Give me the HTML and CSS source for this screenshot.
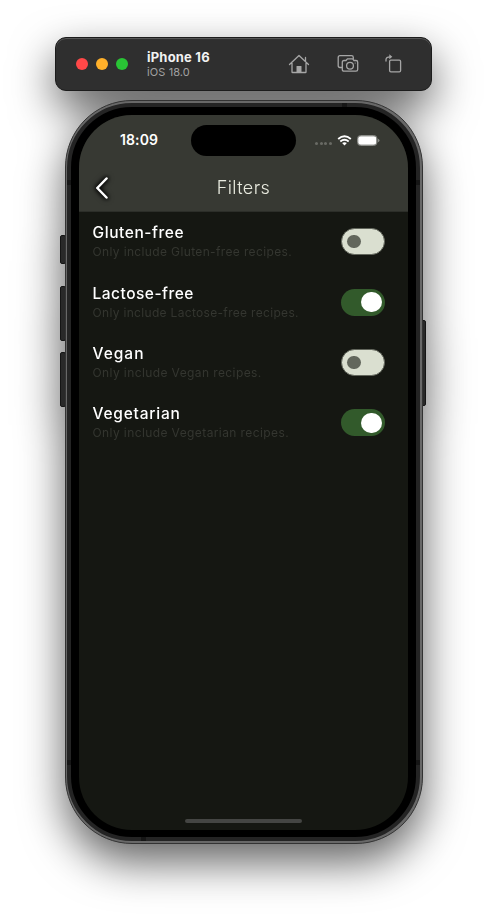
FILE: index.html
```html
<!DOCTYPE html>
<html lang="en">
<head>
<meta charset="utf-8">
<title>iPhone 16</title>
<link rel="stylesheet" href="styles.css">
</head>
<body>
<main class="simulator">
  <header class="titlebar">
    <div class="lights"><i class="light red"></i><i class="light amber"></i><i class="light green"></i></div>
    <div class="device"><div class="device-name">iPhone 16</div><div class="device-os">iOS 18.0</div></div>
    <nav class="tools">
      <svg class="tool-home" width="22" height="22" viewBox="0 0 22 22"><path d="M1.500 11.500 11 2.500l9.500 9M4 10v8.900q0 .6.6.6h12.800q.6 0 .6-.6V10M17.500 8V4.500"/><path class="solid" d="M8.500 19v-5.500q0-.5.5-.5h4q.5 0 .5.500V19z"/></svg>
      <svg class="tool-camera" width="22" height="20" viewBox="0 0 22 20"><path d="M5 13.500H3q-1.800 0-1.800-1.800V3.500Q1.200 1.700 3 1.700h11.500q1.800 0 1.800 1.800v1"/><path d="M7 6.500h2l1.400-1.700h5.200L17 6.500h2q1.700 0 1.700 1.700v7.200q0 1.700-1.700 1.700H7q-1.700 0-1.700-1.700V8.200Q5.300 6.500 7 6.500z"/><circle cx="13" cy="11.700" r="3.400"/><circle class="solid" cx="18.200" cy="9" r=".6"/></svg>
      <svg class="tool-rotate" width="18" height="20" viewBox="0 0 18 20"><rect x="4.600" y="6.200" width="11" height="11.600" rx="1.300"/><path d="M1 7V5.500Q1 2.800 5.500 2.800"/><path class="solid" d="M4.300.3 7.300 2.800 4.300 5.300z"/></svg>
    </nav>
  </header>
  <section class="phone">
    <i class="key action"></i><i class="key vol-up"></i><i class="key vol-down"></i><i class="key power"></i>
    <i class="seam seam-top"></i><i class="seam seam-bottom"></i><i class="seam seam-l1"></i><i class="seam seam-l2"></i><i class="seam seam-r1"></i><i class="seam seam-r2"></i>
    <div class="bezel">
      <div class="screen">
        <div class="top">
          <div class="status">
            <time class="clock">18:09</time>
            <div class="island"></div>
            <div class="signals">
              <div class="dots"><i></i><i></i><i></i><i></i></div>
              <svg width="15" height="11" viewBox="0 0 15 11"><path class="wifi" d="M1.200 3.900Q7.500-1.400 13.800 3.900M3.300 6.400q4.200-3.500 8.400 0"/><path class="wifi-dot" d="M5.100 8.100q2.400-1.800 4.800 0L7.500 10.600z"/></svg>
              <svg width="23" height="11" viewBox="0 0 23 11"><rect class="battery-case" x=".5" y=".5" width="19.500" height="10" rx="3.200"/><rect class="battery-fill" x="1.200" y="1.200" width="18.100" height="8.600" rx="2.400"/><path class="battery-tip" d="M21 3.700q1.500.5 1.500 1.800T21 7.300z"/></svg>
            </div>
          </div>
          <div class="appbar">
            <svg class="back" width="20" height="30" viewBox="0 0 20 30"><path d="M13.500 5.500 4.300 15l9.200 9.500"/></svg>
            <h1>Filters</h1>
          </div>
        </div>
        <ul class="filters">
          <li><div><h2 class="n1">Gluten-free</h2><p class="d1">Only include Gluten-free recipes.</p></div><span class="switch"><i></i></span></li>
          <li><div><h2 class="n2">Lactose-free</h2><p class="d2">Only include Lactose-free recipes.</p></div><span class="switch on"><i></i></span></li>
          <li><div><h2 class="n3">Vegan</h2><p class="d3">Only include Vegan recipes.</p></div><span class="switch"><i></i></span></li>
          <li><div><h2 class="n4">Vegetarian</h2><p class="d4">Only include Vegetarian recipes.</p></div><span class="switch on"><i></i></span></li>
        </ul>
        <div class="home-bar"></div>
      </div>
    </div>
  </section>
</main>
</body>
</html>
```
FILE: styles.css
```css
* { box-sizing: border-box; }
body { margin: 0; height: 919px; overflow: hidden; background: #fff; font-family: Inter, "Liberation Sans", sans-serif; }
h1, h2, p, ul { margin: 0; padding: 0; }
svg { display: block; fill: none; }

.simulator { width: 487px; height: 919px; padding: 37px 55px 0; filter: drop-shadow(0 18px 22px rgba(0, 0, 0, .62)); }

.titlebar { width: 377px; height: 54px; border-radius: 11px; background: #2f2f2f; border: 1px solid #1c1c1c; box-shadow: inset 0 1px #555; display: flex; align-items: center; padding: 0 28px 0 20px; }
.lights { display: flex; gap: 8px; width: 71px; }
.light { width: 12px; height: 12px; border-radius: 50%; }
.red { background: #ff4848; }
.amber { background: #ffb02a; }
.green { background: #29c435; }
.device { flex: 1; padding-top: 1px; }
.device-name { color: #f2f2f2; font-size: 13px; font-weight: 700; line-height: 15px; letter-spacing: .2px; white-space: nowrap; }
.device-os { color: #a2a2a2; font-size: 11px; line-height: 14px; letter-spacing: .1px; }
.tools { display: flex; align-items: center; }
.tools svg { stroke: #a6a6a6; stroke-width: 1.3; stroke-linecap: round; stroke-linejoin: round; }
.tools .solid { fill: #a6a6a6; stroke: none; }
.tool-camera { margin: 0 26px 0 27px; }

.phone { position: relative; width: 358px; height: 744px; margin: 9px 0 0 10px; padding: 2px 2px 2px 1px; border-radius: 67px; background: #686868; border: 1px solid #333; }
.bezel { height: 100%; padding: 8px; border-radius: 65px; background: #000; border: 4px solid #242424; }
.screen { height: 715px; width: 329px; border-radius: 53px; background: #151712; overflow: hidden; display: flex; flex-direction: column; }

.key { position: absolute; background: #292929; border: 1px solid #151515; border-radius: 2px; width: 6px; z-index: -1; }
.action { left: -6px; top: 134px; height: 29px; }
.vol-up { left: -6px; top: 185px; height: 55px; }
.vol-down { left: -6px; top: 251px; height: 55px; }
.power { right: -4px; top: 219px; height: 86px; }
.seam { position: absolute; background: #161616; z-index: 1; }
.seam-top, .seam-bottom { width: 5px; height: 4px; }
.seam-top { left: 276px; top: 2px; }
.seam-bottom { left: 75px; bottom: 2px; }
.seam-l1, .seam-l2, .seam-r1, .seam-r2 { width: 4px; height: 5px; }
.seam-l1, .seam-l2 { left: 1px; }
.seam-r1, .seam-r2 { right: 2px; }
.seam-l1, .seam-r1 { top: 79px; }
.seam-l2, .seam-r2 { bottom: 78px; }

.top { height: 97px; flex: none; background: #373933; border-bottom: 1px solid #2c2e29; }
.status { height: 50px; display: grid; grid-template-columns: 112px 105px 112px; align-items: center; }
.clock { color: #fff; font-size: 14px; font-weight: 600; line-height: 16px; padding-left: 41px; letter-spacing: .1px; }
.island { height: 31px; border-radius: 16px; background: #000; }
.signals { display: flex; align-items: center; padding-left: 19px; gap: 5px; }
.dots { display: flex; gap: 1.5px; padding-top: 7px; }
.dots i { width: 3px; height: 3px; border-radius: 1.5px; background: #686a64; }
.wifi { stroke: #fff; stroke-width: 1.9; }
.wifi-dot { fill: #fff; }
.battery-case { stroke: #8b8d88; stroke-width: 1; }
.battery-fill { fill: #fff; }
.battery-tip { fill: #8b8d88; }

.appbar { height: 46px; display: grid; grid-template-columns: 40px 1fr 40px; align-items: center; }
.back { margin-left: 14px; stroke: #fff; stroke-width: 2.5; stroke-linecap: round; stroke-linejoin: round; filter: drop-shadow(0 0 2px #000) drop-shadow(0 0 2px #000); }
h1 { color: #e8eadf; font-size: 18px; line-height: 26px; font-weight: 300; text-align: center; letter-spacing: .4px; }

.filters { list-style: none; flex: 1; }
.filters li { height: 60.4px; display: flex; justify-content: space-between; align-items: center; padding: 0 23.500px 0 13.500px; }
.filters div { margin-top: -1px; }
h2 { color: #fff; font-size: 15.500px; line-height: 21px; font-weight: 500; white-space: nowrap; }
p { color: #343630; font-size: 12px; line-height: 18px; white-space: nowrap; letter-spacing: .36px; }
.n1 { letter-spacing: .57px; }
.n2 { letter-spacing: .5px; }
.n3 { letter-spacing: 1px; }
.n4 { letter-spacing: .78px; }
.d2 { letter-spacing: .32px; }
.d3 { letter-spacing: .4px; }
.d4 { letter-spacing: .4px; }
.switch { flex: none; width: 43.500px; height: 27px; border-radius: 14px; background: #dadfd0; border: 1.500px solid #62665c; display: flex; align-items: center; margin-top: -1px; padding-left: 5px; }
.switch i { flex: none; width: 13.500px; height: 13.500px; border-radius: 50%; background: #62665c; }
.switch.on { background: #325a2b; border: 0; padding-left: 20px; }
.switch.on i { width: 20.500px; height: 20.500px; background: #fff; }
.home-bar { width: 117px; height: 4px; border-radius: 2px; background: #444543; margin: 0 auto 7px; }
```
